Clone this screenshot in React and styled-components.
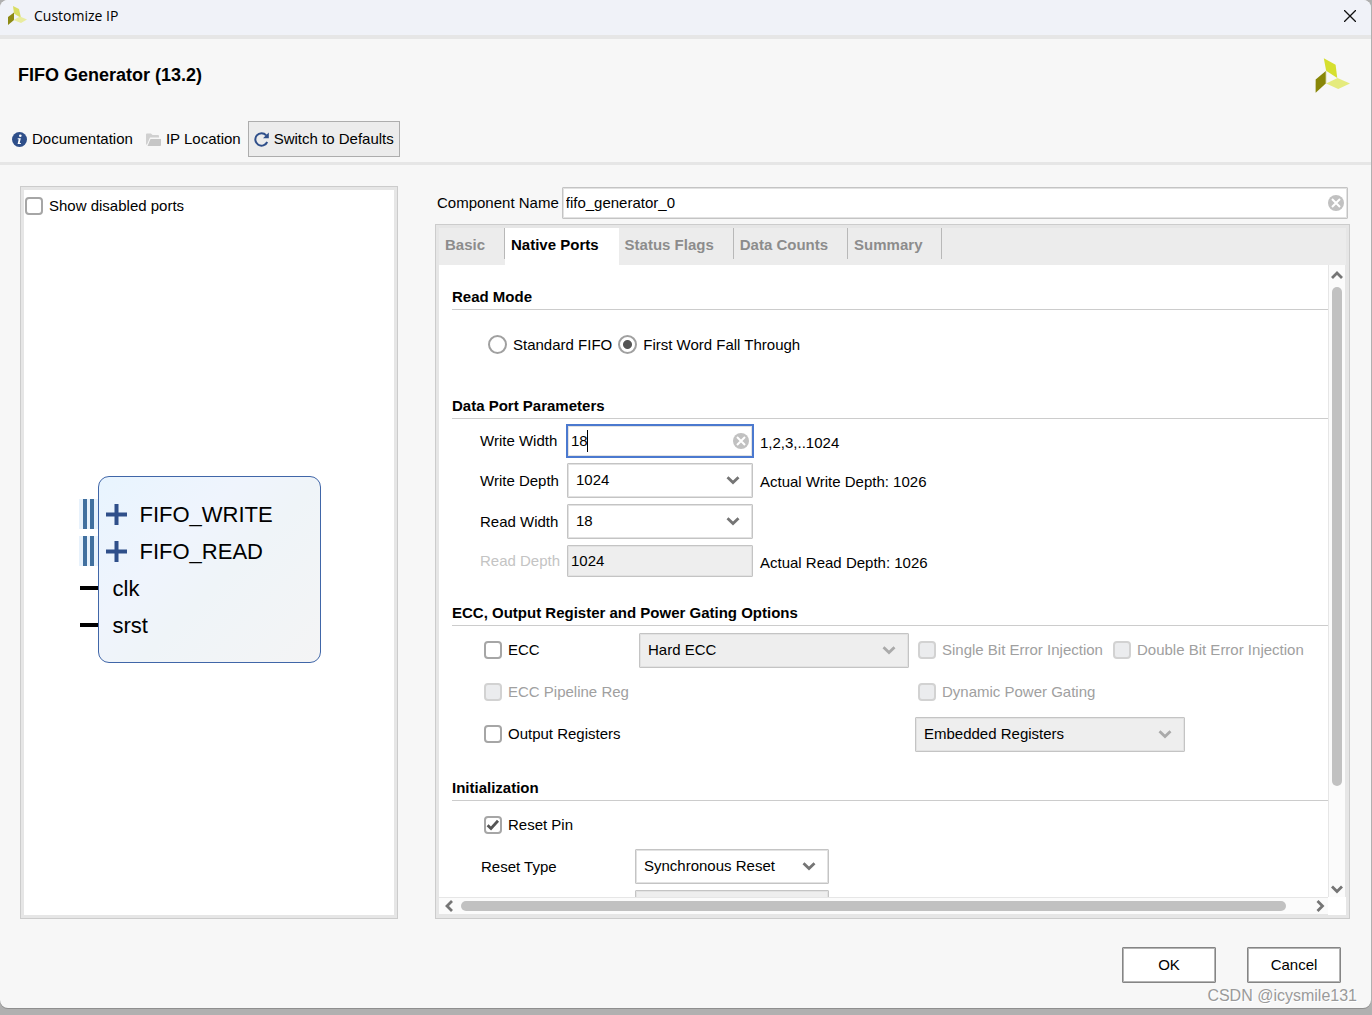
import { useState } from "react";
import styled, { createGlobalStyle, css } from "styled-components";

const chevron = (color) =>
  `url("data:image/svg+xml,%3Csvg xmlns='http://www.w3.org/2000/svg' width='14' height='9' viewBox='0 0 14 9'%3E%3Cpath d='M1.5 1.2 7 6.6l5.5-5.4' fill='none' stroke='%23${color}' stroke-width='2.8'/%3E%3C/svg%3E")`;

const tick = `url("data:image/svg+xml,%3Csvg xmlns='http://www.w3.org/2000/svg' width='14' height='14' viewBox='0 0 14 14'%3E%3Cpath d='M1.6 7.2 5 10.4l7-7.6' fill='none' stroke='%23555' stroke-width='2.8'/%3E%3C/svg%3E")`;

const GlobalStyle = createGlobalStyle`
  * {
    box-sizing: border-box;
  }

  body {
    margin: 0;
    background: #b0b0b0;
    color: #000;
    font: 15px/18px "Liberation Sans", Arial, sans-serif;
  }

  button, input, select {
    font: inherit;
    color: inherit;
    margin: 0;
  }
`;

const Desktop = styled.div`
  display: flex;
  height: 100vh;
  min-width: 1240px;
  padding: 0 1px 7px 0;
`;

const Dialog = styled.main`
  position: relative;
  display: flex;
  flex-direction: column;
  flex: 1;
  min-width: 0;
  background: #f7f7f7;
  border-radius: 8px;
  overflow: hidden;
  box-shadow: 0 1px 0 #8f8f8f;
`;

const TitleBar = styled.div`
  display: flex;
  align-items: center;
  gap: 7px;
  height: 39px;
  padding: 0 15px 3px 8px;
  background: #f0f2f8;
  border-bottom: 4px solid #e6e6e6;
  font-family: "Open Sans", sans-serif;
  font-size: 14px;
`;

const CloseButton = styled.button`
  display: flex;
  margin-left: auto;
  padding: 0;
  border: 0;
  background: none;
`;

const Header = styled.header`
  padding: 19px 21px 5px 6px;
  border-bottom: 3px solid #e6e6e6;
`;

const HeaderRow = styled.div`
  display: flex;
  align-items: center;
  justify-content: space-between;
  padding-left: 12px;
`;

const Title = styled.h1`
  margin: 0;
  padding-bottom: 2px;
  font-size: 18px;
  line-height: 24px;
`;

const Toolbar = styled.div`
  display: flex;
  gap: 1px;
  margin-top: 28px;
`;

const ToolButton = styled.button`
  display: flex;
  align-items: center;
  gap: 5px;
  height: 36px;
  padding: 0 5px;
  border: 1px solid ${(p) => (p.$raised ? "#adadad" : "transparent")};
  background: ${(p) => (p.$raised ? "#ececec" : "none")};
`;

const Body = styled.div`
  display: grid;
  grid-template-columns: 378px minmax(0, 1fr);
  gap: 37px;
  flex: 1;
  min-height: 0;
  padding: 21px 21px 0 20px;
`;

const frame = css`
  display: flex;
  flex-direction: column;
  min-height: 0;
  border: 1px solid #ccc;
  box-shadow: inset 0 0 0 3px #e6e6e6;
  padding: 3px;
  background: #fff;
`;

const PortsPanel = styled.section`
  ${frame}
`;

const PanelOption = styled.div`
  display: flex;
  align-items: center;
  height: 34px;
  padding: 0 1px 2px;
`;

const SymbolArea = styled.div`
  display: flex;
  flex: 1;
  align-items: center;
  justify-content: center;
`;

const Symbol = styled.div`
  display: grid;
  grid-template-columns: 19px 223px 19px;
`;

const Pins = styled.div`
  padding-top: 19px;
`;

const PinSlot = styled.div`
  display: flex;
  align-items: center;
  height: 37px;
`;

const BusPin = styled.div`
  display: flex;
  gap: 3px;
  width: 19px;
  height: 30px;
  padding-left: 4px;
  background: #e8f2fc;

  &::before,
  &::after {
    content: "";
    width: 4px;
    background: #41709f;
  }
`;

const WirePin = styled.div`
  width: 18px;
  height: 4px;
  margin-left: 1px;
  background: #000;
`;

const Block = styled.div`
  height: 187px;
  padding: 19px 7px 17px;
  border: 1px solid #4066a8;
  border-radius: 11px;
  background: linear-gradient(135deg, #e8f4fe 0%, #eff4fd 35%, #eff4f8 55%, #f4f4f5 100%);
  font-size: 22px;
`;

const Port = styled.div`
  display: flex;
  align-items: center;
  gap: 13px;
  height: 37px;
  padding-left: ${(p) => (p.$bus ? 0 : 7)}px;
`;

const Settings = styled.section`
  display: flex;
  flex-direction: column;
  min-height: 0;
`;

const NameRow = styled.div`
  display: flex;
  align-items: center;
  gap: 3px;
  padding: 1px 2px 5px;
`;

const Field = styled.div`
  position: relative;
  flex: 1;
`;

const TextInput = styled.input`
  display: block;
  width: 100%;
  height: 32px;
  padding: 0 24px 2px 3px;
  border: 1px solid #c4c4c4;
  border-radius: 1px;
  background: #fff;
  box-shadow: inset 0 0 0 1px #e2e2e2;
  outline: none;

  ${(p) =>
    p.$active &&
    css`
      border-radius: 0;
      outline: 2px solid #4b79cf;
      outline-offset: -1px;
      caret-color: transparent;
    `}

  &:disabled {
    background: #eee;
    color: #000;
  }
`;

const Caret = styled.span`
  position: absolute;
  left: 20px;
  top: 5px;
  width: 1px;
  height: 22px;
  background: #000;
`;

const ClearButton = styled.button`
  position: absolute;
  right: 4px;
  top: 8px;
  display: flex;
  padding: 0;
  border: 0;
  background: none;
`;

const TabPane = styled.div`
  ${frame}
  flex: 1;
`;

const Tabs = styled.div`
  display: flex;
  flex: none;
  height: 37px;
  background: #ececec;
`;

const Tab = styled.button`
  display: flex;
  align-items: flex-start;
  padding: 0;
  border: 0;
  background: ${(p) => (p.$active ? "#fff" : "none")};
  color: ${(p) => (p.$active ? "#000" : "#8c8c8c")};
  font-weight: bold;

  span {
    padding: 8px 19px 0 6px;
  }

  &::after {
    content: "";
    width: 1px;
    height: 31px;
    background: ${(p) => (p.$active ? "#fff" : "#b8b8b8")};
  }
`;

const ScrollFrame = styled.div`
  display: grid;
  grid-template-columns: minmax(0, 1fr) 18px;
  grid-template-rows: minmax(0, 1fr) 18px;
  flex: 1;
  min-height: 0;
`;

const Content = styled.div`
  overflow: hidden;
  padding: 20px 0 0 13px;
`;

const ScrollBar = styled.div`
  display: flex;
  flex-direction: ${(p) => (p.$vertical ? "column" : "row")};
  align-items: center;
  background: #fbfbfb;
  border: 0 solid #e6e6e6;
  border-width: ${(p) => (p.$vertical ? "0 1px 0 1px" : "1px 0 1px 0")};
`;

const ArrowButton = styled.button`
  display: flex;
  flex: none;
  align-items: center;
  justify-content: center;
  width: ${(p) => (p.$vertical || p.$end ? 16 : 22)}px;
  height: ${(p) => (p.$vertical && !p.$end ? 22 : 16)}px;
  padding: 0;
  border: 0;
  background: none;
`;

const Track = styled.div`
  flex: 1;
`;

const Thumb = styled.div`
  width: ${(p) => (p.$vertical ? "10px" : "97%")};
  height: ${(p) => (p.$vertical ? "84%" : "10px")};
  border-radius: 5px;
  background: #c1c1c1;
`;

const SectionTitle = styled.h2`
  margin: 0;
  border-bottom: 1px solid #ccc;
  font-size: 15px;
  line-height: 24px;
`;

const RadioRow = styled.div`
  display: flex;
  gap: 6px;
  height: 84px;
  padding: 25px 36px 0;
`;

const CheckLabel = styled.label`
  display: flex;
  align-items: center;
  align-self: ${(p) => (p.$top ? "flex-start" : "center")};
  gap: 6px;
  padding-left: ${(p) => (p.$inset ? 3 : 0)}px;
  padding-bottom: ${(p) => (p.$inset ? 1 : 0)}px;
  color: ${(p) => (p.$disabled ? "#a0a0a0" : "#000")};
  white-space: nowrap;
  grid-column: ${(p) => p.$column || "auto"};
`;

const CheckInput = styled.input`
  appearance: none;
  flex: none;
  width: 18px;
  height: 18px;
  border: 2px solid #a6a6a6;
  border-radius: 4px;
  background: #fff;

  &:checked {
    background: #fff ${tick} center no-repeat;
  }

  &:disabled {
    border-color: #d2d2d2;
    background: #ebecee;
  }
`;

const RadioInput = styled.input`
  appearance: none;
  width: 19px;
  height: 19px;
  border: 2px solid #a0a0a0;
  border-radius: 50%;
  background: #fff;

  &:checked {
    background: radial-gradient(circle, #555 4px, #fff 5px);
  }
`;

const PortGrid = styled.div`
  display: grid;
  grid-template-columns: 87px 186px auto;
  justify-content: start;
  align-items: center;
  row-gap: 6px;
  padding: 6px 0 24px 28px;
`;

const FieldLabel = styled.label`
  color: ${(p) => (p.$disabled ? "#c4c4c4" : "#000")};
`;

const Note = styled.span`
  grid-column: 3;
  padding: 3px 0 0 7px;
`;

const Select = styled.select`
  appearance: none;
  grid-column: ${(p) => p.$column || "auto"};
  width: ${(p) => p.$width}px;
  height: 35px;
  padding: 0 30px 1px 8px;
  border: 1px solid #c4c4c4;
  border-radius: 1px;
  background: #fff ${chevron("757575")} right 12px center no-repeat;
  box-shadow: inset 0 0 0 1px #e2e2e2;

  &:disabled {
    background: #eee ${chevron("aaaaaa")} right 12px center no-repeat;
    color: #000;
    opacity: 1;
  }
`;

const EccGrid = styled.div`
  display: grid;
  grid-template-columns: 158px 276px 195px auto;
  grid-auto-rows: 35px;
  justify-content: start;
  row-gap: 7px;
  padding: 7px 0 24px 29px;
`;

const InitGrid = styled.div`
  display: grid;
  grid-template-columns: 154px 194px;
  grid-auto-rows: 35px;
  align-items: center;
  row-gap: 6px;
  padding: 7px 0 24px 29px;
`;

const Footer = styled.footer`
  display: flex;
  justify-content: flex-end;
  gap: 31px;
  padding: 28px 30px 25px;
`;

const DialogButton = styled.button`
  width: 94px;
  height: 36px;
  padding: 0;
  border: 1px solid #858585;
  border-radius: 1px;
  background: #fff;
  box-shadow: inset 0 0 0 1px #b4b4b4;
`;

const Watermark = styled.div`
  position: absolute;
  right: 14px;
  bottom: 3px;
  color: #9a9a9a;
  font-size: 16px;
  text-shadow: 1px 1px 0 #fff;
`;

const Logo = ({ size }) => (
  <svg width={size} height={size} viewBox="430 174 107 105">
    <path d="M457 174 493 194 498 234 464 212Z" fill="#d6df2f" />
    <path d="M463 213v38l-31 28v-40Z" fill="#888607" />
    <path d="M464 251 499 234 537 251 501 268Z" fill="#e5eb7d" />
    <path d="M464.500 212v39" stroke="#dcdcae" strokeWidth="2" />
  </svg>
);

const SmallLogo = () => (
  <svg width="19" height="20" viewBox="0 0 19 20">
    <path d="M5 0 11 3 13 12 6 7.500Z" fill="#d9dd62" />
    <path d="M0 11 6 6.500V14L0 19Z" fill="#8d8a14" />
    <path d="M5.500 14 12 10.500 19 13.500 13 17Z" fill="#e9ec9f" />
  </svg>
);

const InfoIcon = () => (
  <svg width="15" height="15" viewBox="0 0 15 15">
    <circle cx="7.500" cy="7.500" r="7.500" fill="#2f4f8a" />
    <circle cx="8.300" cy="3.800" r="1.300" fill="#fff" />
    <path d="M5.700 6.300h3.100L7.700 11h1.200v.9H5.600L6.700 7.200h-1Z" fill="#fff" />
  </svg>
);

const FolderIcon = () => (
  <svg width="15" height="15" viewBox="0 0 15 15">
    <path d="M0 12.500V2.500q0-1 1-1h4l1.500 1.500H12q1 0 1 1V5.500H4L1 12.500Z" fill="#d0d0d0" />
    <path d="M4.500 7H15v6q0 1-1 1H1.500Z" fill="#c6c6c6" />
  </svg>
);

const RefreshIcon = () => (
  <svg width="15" height="15" viewBox="0 0 15 15">
    <path d="M13.200 10A6.200 6.200 0 1 1 12.200 3.400" fill="none" stroke="#2f4f8a" strokeWidth="2" />
    <path d="M14.800 0.600V6.300H9Z" fill="#2f4f8a" />
  </svg>
);

const PlusIcon = () => (
  <svg width="21" height="21" viewBox="0 0 21 21">
    <path d="M10.500 0v21M0 10.500h21" stroke="#2f4f8a" strokeWidth="4" />
  </svg>
);

const arrows = {
  up: "M1 8 6 3l5 5",
  down: "M1 3.500 6 8.500l5-5",
  left: "M8 1l-5 5 5 5",
  right: "M3.500 1l5 5-5 5",
};

function Arrow({ dir }) {
  const vertical = dir === "up" || dir === "down";
  return (
    <ArrowButton
      $vertical={vertical}
      $end={dir === "down" || dir === "right"}
      aria-label={`Scroll ${dir}`}
    >
      <svg width="12" height="12" viewBox="0 0 12 12">
        <path d={arrows[dir]} fill="none" stroke="#757575" strokeWidth="2.800" />
      </svg>
    </ArrowButton>
  );
}

function Clear({ onClick }) {
  return (
    <ClearButton aria-label="Clear" onClick={onClick}>
      <svg width="16" height="16" viewBox="0 0 16 16">
        <circle cx="8" cy="8" r="8" fill="#c1c1c1" />
        <path d="m4 4 8 8M12 4l-8 8" stroke="#fff" strokeWidth="2" />
      </svg>
    </ClearButton>
  );
}

function Check({ children, disabled, defaultChecked, ...rest }) {
  return (
    <CheckLabel $disabled={disabled} {...rest}>
      <CheckInput type="checkbox" disabled={disabled} defaultChecked={defaultChecked} />
      {children}
    </CheckLabel>
  );
}

const tabs = ["Basic", "Native Ports", "Status Flags", "Data Counts", "Summary"];

const ports = [
  { name: "FIFO_WRITE", bus: true },
  { name: "FIFO_READ", bus: true },
  { name: "clk" },
  { name: "srst" },
];

function App() {
  const [name, setName] = useState("fifo_generator_0");
  const [writeWidth, setWriteWidth] = useState("18");
  const [tab, setTab] = useState("Native Ports");

  return (
    <Desktop>
      <GlobalStyle />
      <Dialog>
        <TitleBar>
          <SmallLogo />
          Customize IP
          <CloseButton aria-label="Close">
            <svg width="12" height="12" viewBox="0 0 12 12">
              <path d="M0 0l12 12M12 0L0 12" stroke="#111" strokeWidth="1.300" />
            </svg>
          </CloseButton>
        </TitleBar>

        <Header>
          <HeaderRow>
            <Title>FIFO Generator (13.2)</Title>
            <Logo size={35} />
          </HeaderRow>
          <Toolbar>
            <ToolButton><InfoIcon />Documentation</ToolButton>
            <ToolButton><FolderIcon />IP Location</ToolButton>
            <ToolButton $raised><RefreshIcon />Switch to Defaults</ToolButton>
          </Toolbar>
        </Header>

        <Body>
          <PortsPanel>
            <PanelOption>
              <Check>Show disabled ports</Check>
            </PanelOption>
            <SymbolArea>
              <Symbol>
                <Pins>
                  {ports.map((p) => (
                    <PinSlot key={p.name}>{p.bus ? <BusPin /> : <WirePin />}</PinSlot>
                  ))}
                </Pins>
                <Block>
                  {ports.map((p) => (
                    <Port key={p.name} $bus={p.bus}>
                      {p.bus && <PlusIcon />}
                      {p.name}
                    </Port>
                  ))}
                </Block>
              </Symbol>
            </SymbolArea>
          </PortsPanel>

          <Settings>
            <NameRow>
              <label htmlFor="component-name">Component Name</label>
              <Field>
                <TextInput id="component-name" value={name} onChange={(e) => setName(e.target.value)} />
                <Clear onClick={() => setName("")} />
              </Field>
            </NameRow>

            <TabPane>
              <Tabs role="tablist">
                {tabs.map((t) => (
                  <Tab key={t} role="tab" aria-selected={t === tab} $active={t === tab} onClick={() => setTab(t)}>
                    <span>{t}</span>
                  </Tab>
                ))}
              </Tabs>

              <ScrollFrame>
                <Content>
                  <SectionTitle>Read Mode</SectionTitle>
                  <RadioRow>
                    <CheckLabel $top>
                      <RadioInput type="radio" name="read-mode" />
                      Standard FIFO
                    </CheckLabel>
                    <CheckLabel $top>
                      <RadioInput type="radio" name="read-mode" defaultChecked />
                      First Word Fall Through
                    </CheckLabel>
                  </RadioRow>

                  <SectionTitle>Data Port Parameters</SectionTitle>
                  <PortGrid>
                    <FieldLabel htmlFor="write-width">Write Width</FieldLabel>
                    <Field>
                      <TextInput
                        id="write-width"
                        $active
                        value={writeWidth}
                        onChange={(e) => setWriteWidth(e.target.value)}
                      />
                      <Caret />
                      <Clear onClick={() => setWriteWidth("")} />
                    </Field>
                    <Note>1,2,3,..1024</Note>

                    <FieldLabel htmlFor="write-depth">Write Depth</FieldLabel>
                    <Select id="write-depth" $width={186}>
                      <option>1024</option>
                    </Select>
                    <Note>Actual Write Depth: 1026</Note>

                    <FieldLabel htmlFor="read-width">Read Width</FieldLabel>
                    <Select id="read-width" $width={186} $column="2 / 4">
                      <option>18</option>
                    </Select>

                    <FieldLabel htmlFor="read-depth" $disabled>Read Depth</FieldLabel>
                    <TextInput id="read-depth" defaultValue="1024" disabled />
                    <Note>Actual Read Depth: 1026</Note>
                  </PortGrid>

                  <SectionTitle>ECC, Output Register and Power Gating Options</SectionTitle>
                  <EccGrid>
                    <Check $inset>ECC</Check>
                    <Select aria-label="ECC type" $width={270} disabled>
                      <option>Hard ECC</option>
                    </Select>
                    <Check $inset disabled>Single Bit Error Injection</Check>
                    <Check $inset disabled>Double Bit Error Injection</Check>

                    <Check $inset disabled>ECC Pipeline Reg</Check>
                    <Check $inset disabled $column="3 / 5">Dynamic Power Gating</Check>

                    <Check $inset>Output Registers</Check>
                    <Select aria-label="Register type" $width={270} $column="3 / 5" disabled>
                      <option>Embedded Registers</option>
                    </Select>
                  </EccGrid>

                  <SectionTitle>Initialization</SectionTitle>
                  <InitGrid>
                    <Check $inset $column="1 / 3" defaultChecked>Reset Pin</Check>
                    <FieldLabel htmlFor="reset-type">Reset Type</FieldLabel>
                    <Select id="reset-type" $width={194}>
                      <option>Synchronous Reset</option>
                    </Select>
                    <Select aria-label="Full Flags Reset Value" $width={194} $column="2" disabled />
                  </InitGrid>
                </Content>

                <ScrollBar $vertical>
                  <Arrow dir="up" />
                  <Track><Thumb $vertical /></Track>
                  <Arrow dir="down" />
                </ScrollBar>
                <ScrollBar>
                  <Arrow dir="left" />
                  <Track><Thumb /></Track>
                  <Arrow dir="right" />
                </ScrollBar>
              </ScrollFrame>
            </TabPane>
          </Settings>
        </Body>

        <Footer>
          <DialogButton>OK</DialogButton>
          <DialogButton>Cancel</DialogButton>
        </Footer>
        <Watermark>CSDN @icysmile131</Watermark>
      </Dialog>
    </Desktop>
  );
}

export default App;
